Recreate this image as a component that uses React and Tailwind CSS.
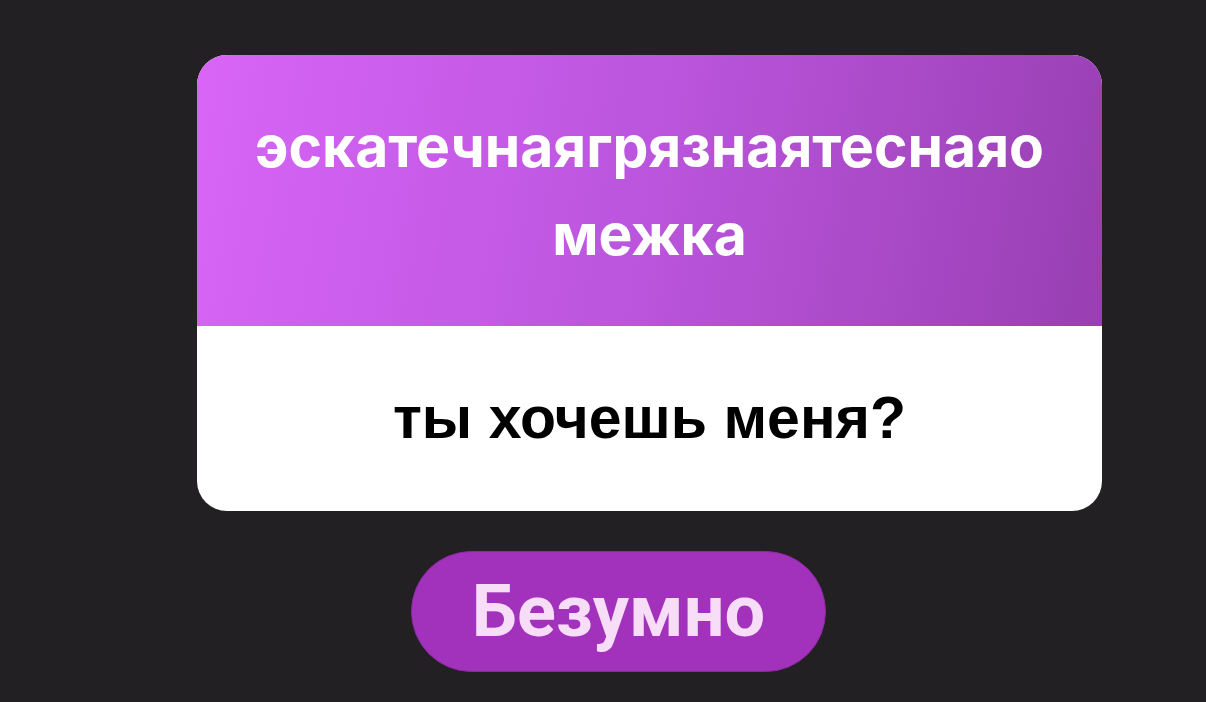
export default function App() {
  return (
    <div className="min-h-screen w-full bg-[#222023] pl-[197px] pt-[55px]">
      <div className="w-[905px] overflow-hidden rounded-[30px] bg-white">
        <div className="flex h-[271px] items-center justify-center bg-linear-[100deg] from-[#d865f7] via-[#bb55dd] to-[#983fb2] px-[30px]">
          <p className="break-all text-center text-[57px] font-bold leading-[88px] text-white [font-family:Inter,'Noto_Sans',sans-serif]">
            эскатечнаягрязнаятеснаяо межка
          </p>
        </div>
        <div className="flex h-[185px] items-center justify-center">
          <p className="text-center text-[59px] font-bold leading-none text-black [font-family:'Liberation_Sans',Arial,sans-serif]">
            ты хочешь меня?
          </p>
        </div>
      </div>
      <div className="mt-[40px] ml-[214px] flex h-[121px] w-[415px] items-center justify-center rounded-full border border-[#8a2aa0] bg-[#a232bc]">
        <span className="text-[72px] font-bold leading-none text-[#f7ddf7] [font-family:Roboto,sans-serif]">
          Безумно
        </span>
      </div>
    </div>
  );
}
